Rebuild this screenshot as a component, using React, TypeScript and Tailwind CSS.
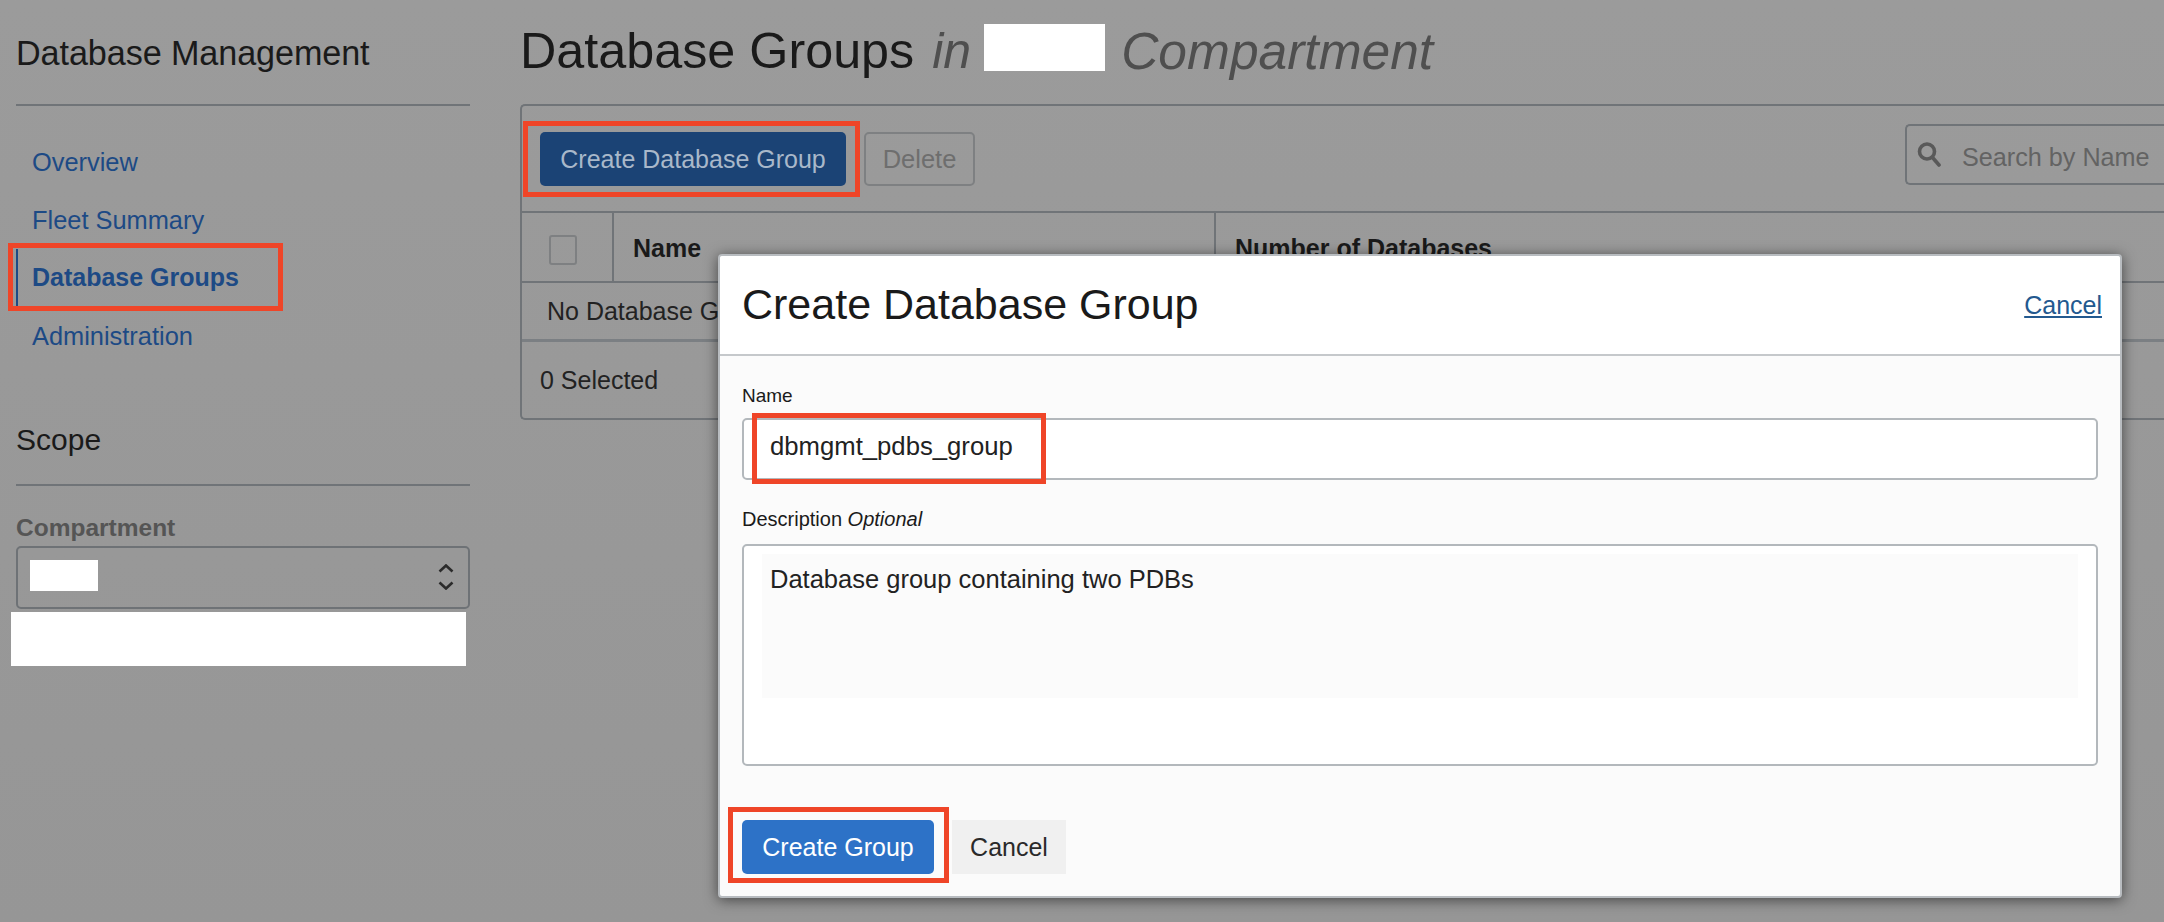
const sans = "font-['Liberation_Sans',Arial,sans-serif]";

function NavItem({ label, active }: { label: string; active?: boolean }) {
  return (
    <div
      className={`h-[58px] flex items-center pl-[14px] border-l-2 text-[#1d4a85] ${
        active ? "font-bold text-[25px] border-[#1d4a85]" : "text-[25.4px] border-transparent"
      }`}
    >
      {label}
    </div>
  );
}

export default function App() {
  return (
    <div className={`${sans} relative flex w-full h-[922px] overflow-hidden bg-gradient-to-b from-[#9b9b9b] to-[#969696] text-[#1a1a1a]`}>
      {/* Sidebar */}
      <aside className="relative w-[520px] shrink-0 pl-4">
        <div className="w-[454px]">
          <div className="h-[106px] pt-[30px] border-b-2 border-[#707478]">
            <h2 className="text-[34.2px] leading-[46px] tracking-[-0.1px]">Database Management</h2>
          </div>

          <nav className="mt-[27px] flex flex-col">
            <NavItem label="Overview" />
            <NavItem label="Fleet Summary" />
            <NavItem label="Database Groups" active />
            <NavItem label="Administration" />
          </nav>

          <h3 className="mt-[55px] text-[30px] leading-[40px]">Scope</h3>
          <div className="mt-[24px] h-[2px] bg-[#707478]" />

          <div className="mt-[30px] text-[24.5px] leading-[24px] font-bold text-[#555555]">Compartment</div>
          <div className="mt-[6px] h-[63px] border-2 border-[#6e7276] rounded-[5px] flex items-center justify-between pl-3 pr-[14px]">
            <div className="w-[68px] h-[31px] bg-white -mt-[4px]" />
            <svg width="16" height="26" viewBox="0 0 16 26" fill="none" stroke="#2b2b2b" strokeWidth="2.6" className="-mt-[2px]">
              <path d="M1.5 7.5 L8 1.5 L14.5 7.5" />
              <path d="M1.5 18.5 L8 24.5 L14.5 18.5" />
            </svg>
          </div>
          <div className="mt-[3px] -ml-[5px] w-[455px] h-[54px] bg-white" />
        </div>

        {/* Highlight round the active item */}
        <div className="absolute left-[8px] top-[243px] w-[275px] h-[68px] border-[5px] border-[#ef4528]" />
      </aside>

      {/* Main */}
      <main className="relative flex-1 min-w-0">
        <div className="h-[104px] pt-[22px] flex items-start whitespace-nowrap">
          <h1 className="text-[50.3px] leading-[58px]">Database Groups</h1>
          <em className="ml-[18px] text-[50px] leading-[58px] text-[#4f4f4f]">in</em>
          <div className="ml-[13px] mt-[2px] w-[121px] h-[47px] bg-white" />
          <em className="ml-[16px] text-[51.5px] leading-[58px] text-[#4f4f4f]">Compartment</em>
        </div>

        <section className="h-[316px] border-2 border-r-0 border-[#707478] rounded-l-[5px] flex flex-col">
          {/* Toolbar */}
          <div className="relative h-[107px] shrink-0 flex items-start pl-[18px] border-b-2 border-[#707478]">
            <button className="mt-[26px] w-[306px] h-[54px] pt-[2px] rounded-[5px] bg-[#1b4375] text-[25px] text-[#a9b8ca]">
              Create Database Group
            </button>
            <button className="ml-[18px] mt-[26px] w-[111px] h-[54px] pt-[1px] rounded-[5px] border-2 border-[#7e8082] text-[25.5px] text-[#6e6e6e]">
              Delete
            </button>
            <div className="absolute left-[1383px] top-[18px] w-[400px] h-[61px] border-2 border-r-0 border-[#707478] rounded-l-[5px] flex items-center pl-[9px]">
              <svg width="26" height="26" viewBox="0 0 26 26" fill="none" stroke="#595959" strokeWidth="3.6" className="-mt-[1px]">
                <circle cx="11" cy="10.5" r="7.5" />
                <path d="M16.5 16.5 L23 24" strokeLinecap="round" />
              </svg>
              <span className="ml-[20px] mt-[6px] text-[25.2px] text-[#636363]">Search by Name</span>
            </div>
            <div className="absolute left-[1px] top-[15px] w-[337px] h-[76px] border-[5px] border-[#ef4528]" />
          </div>

          {/* Table head */}
          <div className="h-[70px] shrink-0 flex border-b-2 border-[#707478]">
            <div className="w-[92px] shrink-0 border-r-2 border-[#707478] pl-[27px] pt-[22px]">
              <div className="w-[28px] h-[30px] rounded-[3px] border-2 border-[#7e8082]" />
            </div>
            <div className="w-[602px] shrink-0 border-r-2 border-[#707478] pl-[19px] pt-[20px] text-[25px] leading-[30px] font-bold">
              Name
            </div>
            <div className="pl-[19px] pt-[20px] text-[25px] leading-[30px] font-bold whitespace-nowrap">Number of Databases</div>
          </div>

          {/* Empty row */}
          <div className="h-[59px] shrink-0 flex items-center pl-[25px] pt-[2px] border-b-[3px] border-[#7b7f83] text-[25px] text-[#222222]">
            No Database Groups
          </div>

          <div className="flex-1 pl-[18px] pt-[23px] text-[25px] leading-[30px] text-[#222222]">0 Selected</div>
        </section>
      </main>

      {/* Dialog */}
      <div className="absolute left-[718px] top-[254px] w-[1404px] h-[644px] bg-[#fbfbfb] border-2 border-[#b8bcc0] rounded-[4px] shadow-[0_2px_14px_rgba(0,0,0,0.55)] flex flex-col">
        <div className="h-[100px] shrink-0 bg-white border-b-2 border-[#c5c8cb] flex items-center justify-between pl-[22px] pr-[18px] rounded-t-[3px]">
          <h2 className="text-[43px] leading-[52px] text-[#1a1a1a] -mt-[3px]">Create Database Group</h2>
          <a className="text-[25px] text-[#23598f] underline mt-[1px]">Cancel</a>
        </div>

        <div className="relative flex-1 pl-[22px] pr-[22px] pt-[28px]">
          <label className="block text-[19px] leading-[24px] text-[#1a1a1a]">Name</label>
          <div className="mt-[10px] h-[62px] bg-white border-2 border-[#b3b8bc] rounded-[5px] flex items-center pl-[26px] pb-[5px] text-[25.7px] text-[#222222]">
            dbmgmt_pdbs_group
          </div>

          <label className="block mt-[27px] text-[20px] leading-[24px] text-[#1a1a1a]">
            Description <em>Optional</em>
          </label>
          <div className="mt-[13px] h-[222px] bg-white border-2 border-[#b3b8bc] rounded-[5px] pt-[8px] px-[18px]">
            <div className="h-[144px] bg-[#fbfbfb] pl-[8px] pt-[10px] text-[25.5px] leading-[30px] text-[#222222]">
              Database group containing two PDBs
            </div>
          </div>

          <div className="mt-[54px] flex items-start gap-[18px]">
            <button className="w-[192px] h-[54px] pt-[2px] rounded-[5px] bg-[#2d72c7] text-[25px] text-white">Create Group</button>
            <button className="w-[114px] h-[54px] pt-[2px] bg-[#f0f0f0] text-[25px] text-[#2a2a2a]">Cancel</button>
          </div>

          {/* Highlights */}
          <div className="absolute left-[32px] top-[57px] w-[294px] h-[71px] border-[5px] border-[#ef4528]" />
          <div className="absolute left-[8px] top-[451px] w-[221px] h-[76px] border-[5px] border-[#ef4528]" />
        </div>
      </div>
    </div>
  );
}
